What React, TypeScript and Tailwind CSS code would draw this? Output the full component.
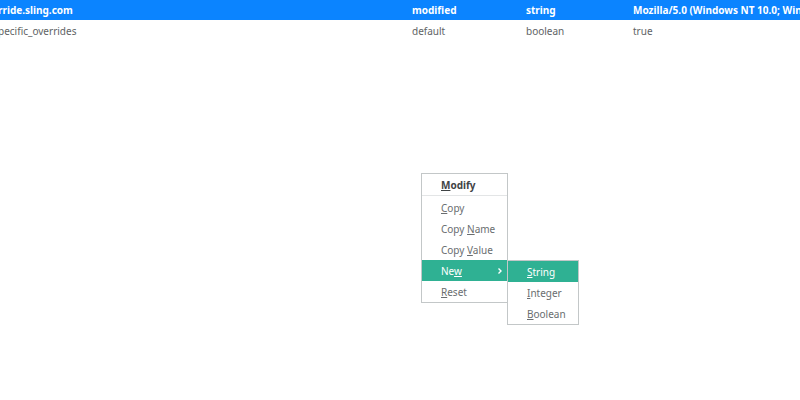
import type { ReactNode } from "react";

const prefs = [
  {
    name: "rride.sling.com",
    status: "modified",
    type: "string",
    value: "Mozilla/5.0 (Windows NT 10.0; Win",
    selected: true,
  },
  {
    name: "pecific_overrides",
    status: "default",
    type: "boolean",
    value: "true",
    selected: false,
  },
];

function MenuItem({
  children,
  active = false,
  bold = false,
  submenu = false,
}: {
  children: ReactNode;
  active?: boolean;
  bold?: boolean;
  submenu?: boolean;
}) {
  return (
    <button
      type="button"
      role="menuitem"
      aria-haspopup={submenu ? "menu" : undefined}
      className={`flex h-[21px] w-full items-center justify-between pr-1 pl-[19px] text-left ${
        active ? "bg-[#2fb193] text-white" : bold ? "text-[#3f4345]" : "text-[#696d6f]"
      } ${bold ? "font-bold" : ""}`}
    >
      <span>{children}</span>
      {submenu && (
        <svg viewBox="0 0 6 8" className="h-2 w-1.5" fill="none" stroke="currentColor" strokeWidth="1.4">
          <path d="M1.5 1.5 4 4 1.5 6.5" />
        </svg>
      )}
    </button>
  );
}

export default function App() {
  return (
    <main className="relative min-h-screen overflow-hidden bg-white font-['Noto_Sans',sans-serif] text-[10px] leading-[14px]">
      <table className="w-full table-fixed border-collapse text-left whitespace-nowrap">
        <colgroup>
          <col />
          <col className="w-[114px]" />
          <col className="w-[107px]" />
          <col className="w-[167px]" />
        </colgroup>
        <tbody>
          {prefs.map((pref) => (
            <tr
              key={pref.name}
              className={pref.selected ? "h-5 bg-[#0b84ff] font-bold text-white" : "h-[22px] text-[#606365]"}
            >
              <td className="p-0 -indent-0.5">{pref.name}</td>
              <td className="p-0">{pref.status}</td>
              <td className="p-0">{pref.type}</td>
              <td className="p-0">{pref.value}</td>
            </tr>
          ))}
        </tbody>
      </table>

      <div
        role="menu"
        className="absolute top-[173px] left-[421px] w-[87px] border border-[#c3c7c8] bg-white"
      >
        <MenuItem bold>
          <u>M</u>odify
        </MenuItem>
        <hr className="mb-px border-[#e3e5e6]" />
        <MenuItem>
          <u>C</u>opy
        </MenuItem>
        <MenuItem>
          Copy <u>N</u>ame
        </MenuItem>
        <MenuItem>
          Copy <u>V</u>alue
        </MenuItem>
        <MenuItem active submenu>
          Ne<u>w</u>
        </MenuItem>
        <MenuItem>
          <u>R</u>eset
        </MenuItem>
      </div>

      <div
        role="menu"
        className="absolute top-[260px] left-[507px] w-[72px] border border-[#c3c7c8] bg-white"
      >
        <MenuItem active>
          <u>S</u>tring
        </MenuItem>
        <MenuItem>
          <u>I</u>nteger
        </MenuItem>
        <MenuItem>
          <u>B</u>oolean
        </MenuItem>
      </div>
    </main>
  );
}
